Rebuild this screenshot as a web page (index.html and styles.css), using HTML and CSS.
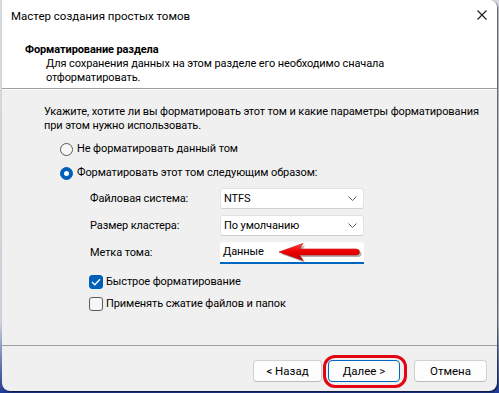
FILE: index.html
```html
<!DOCTYPE html>
<html lang="ru">
<head>
<meta charset="utf-8">
<title>Мастер создания простых томов</title>
<link rel="stylesheet" href="styles.css">
</head>
<body>
<div class="window">
  <div class="titlebar">
    <span class="title">Мастер создания простых томов</span>
    <svg class="close" width="10" height="10" viewBox="0 0 10 10"><path d="M0.5 0.5 L9.5 9.5 M9.5 0.5 L0.5 9.5" stroke="#1a1a1a" stroke-width="1.1" fill="none"/></svg>
  </div>
  <div class="header">
    <div class="h-title">Форматирование раздела</div>
    <div class="h-desc">Для сохранения данных на этом разделе его необходимо сначала<br>отформатировать.</div>
  </div>
  <div class="content">
    <div class="intro">Укажите, хотите ли вы форматировать этот том и какие параметры форматирования<br>при этом нужно использовать.</div>
    <div class="radios">
      <div class="row"><span class="radio"></span><span>Не форматировать данный том</span></div>
      <div class="row"><span class="radio checked"></span><span>Форматировать этот том следующим образом:</span></div>
    </div>
    <div class="fields">
      <span class="label">Файловая система:</span>
      <div class="select"><span>NTFS</span><svg class="chev" width="9" height="5" viewBox="0 0 9 5"><path d="M0.5 0.5 L4.5 4.5 L8.5 0.5" stroke="#606060" stroke-width="1" fill="none"/></svg></div>
      <span class="label">Размер кластера:</span>
      <div class="select"><span>По умолчанию</span><svg class="chev" width="9" height="5" viewBox="0 0 9 5"><path d="M0.5 0.5 L4.5 4.5 L8.5 0.5" stroke="#606060" stroke-width="1" fill="none"/></svg></div>
      <span class="label">Метка тома:</span>
      <div class="input"><span>Данные</span>
        <svg class="arrow" width="86" height="22" viewBox="0 0 86 22">
          <defs>
            <linearGradient id="ag" x1="0" y1="0" x2="0" y2="1">
              <stop offset="0" stop-color="#ff4a4a"/>
              <stop offset="0.45" stop-color="#f00000"/>
              <stop offset="1" stop-color="#b80000"/>
            </linearGradient>
          </defs>
          <path d="M1 10 L25 1.5 L21.5 7 L78 7 Q81.5 7 81.5 10 Q81.5 13 78 13 L21.5 13 L25 18.5 Z" fill="#000" opacity="0.3" transform="translate(2,2)"/>
          <path d="M1 10 L25 1.5 L21.5 7 L78 7 Q81.5 7 81.5 10 Q81.5 13 78 13 L21.5 13 L25 18.5 Z" fill="url(#ag)" stroke="#c00000" stroke-width="0.6"/>
        </svg>
      </div>
    </div>
    <div class="checks">
      <div class="row"><span class="check checked"><svg width="10" height="8" viewBox="0 0 10 8"><path d="M1 4 L3.8 6.8 L9 1.2" stroke="#fff" stroke-width="1.3" fill="none"/></svg></span><span>Быстрое форматирование</span></div>
      <div class="row"><span class="check"></span><span>Применять сжатие файлов и папок</span></div>
    </div>
  </div>
  <div class="footer">
    <button class="btn b-back">&lt; Назад</button>
    <span class="hl"><button class="btn b-next">Далее &gt;</button></span>
    <button class="btn b-cancel">Отмена</button>
  </div>
</div>
</body>
</html>
```
FILE: styles.css
```css
html, body {
  margin: 0;
  padding: 0;
}
body {
  width: 499px;
  height: 393px;
  overflow: hidden;
  background: linear-gradient(to bottom, #d9dce3 0%, #d0d4dc 82%, #1f3a96 100%);
  font-family: Roboto, "Liberation Sans", Arial, sans-serif;
  font-size: 11px;
  letter-spacing: -0.1px;
  color: #000;
}
.window {
  margin-left: 2px;
  width: 495px;
  height: 391px;
  display: flex;
  flex-direction: column;
  background: #f0f0f0;
  border-radius: 0 8px 8px 8px;
  overflow: hidden;
  box-shadow: 1px 1px 2px rgba(0,0,0,0.7);
}
.titlebar {
  height: 30px;
  flex: none;
  background: #fff;
  display: flex;
  align-items: center;
  justify-content: space-between;
  padding: 0 10px 0 9px;
}
.title {
  font-size: 11.5px;
  letter-spacing: 0;
  margin-top: 2px;
}
.close {
  display: block;
}
.header {
  flex: none;
  height: 59px;
  background: #fff;
  border-bottom: 1px solid #a0a0a0;
  box-sizing: border-box;
  padding: 13px 0 0 23px;
  line-height: 14px;
}
.h-title {
  font-weight: bold;
}
.h-desc {
  padding-left: 21px;
}
.content {
  flex: 1;
  padding: 15px 0 0 42px;
  line-height: 14px;
  border-top: 1px solid #fff;
}
.intro {
  white-space: nowrap;
}
.row {
  display: flex;
  align-items: center;
  height: 20px;
  white-space: nowrap;
}
.radios {
  margin: 6px 0 0 16px;
  display: flex;
  flex-direction: column;
  gap: 4px;
}
.radio {
  width: 11px;
  height: 11px;
  border: 1px solid #5a5a5a;
  border-radius: 50%;
  background: #f7f7f7;
  margin-right: 4px;
  position: relative;
}
.radio.checked {
  background: #005fb8;
  border-color: #005fb8;
}
.radio.checked::after {
  content: "";
  position: absolute;
  left: 3px;
  top: 3px;
  width: 5px;
  height: 5px;
  border-radius: 50%;
  background: #fff;
}
.fields {
  margin: 5px 0 0 46px;
  display: grid;
  grid-template-columns: 130px 144px;
  grid-auto-rows: 21px;
  row-gap: 6px;
  align-items: center;
}
.label {
  line-height: 21px;
}
.select, .input {
  height: 21px;
  box-sizing: border-box;
  background: #fff;
  border: 1px solid #e2e2e2;
  border-bottom-color: #cfcfcf;
  border-radius: 3px;
  display: flex;
  align-items: center;
  justify-content: space-between;
  padding: 0 6px 0 3px;
}
.input {
  border: none;
  border-bottom: 2px solid #0067c0;
  border-radius: 2px 2px 0 0;
  position: relative;
  height: 22px;
  padding-top: 1px;
}
.chev {
  display: block;
}
.arrow {
  position: absolute;
  left: 58px;
  top: 0;
}
.checks {
  margin: 9px 0 0 45px;
  display: flex;
  flex-direction: column;
  gap: 2px;
}
.check {
  width: 12px;
  height: 12px;
  border: 1px solid #5a5a5a;
  border-radius: 3px;
  background: #f7f7f7;
  margin-right: 3px;
  display: flex;
  align-items: center;
  justify-content: center;
}
.check.checked {
  background: #005fb8;
  border-color: #005fb8;
}
.check svg {
  display: block;
}
.footer {
  flex: none;
  height: 46px;
  box-sizing: border-box;
  border-top: 1px solid #a0a0a0;
  padding: 14px 10px 0 0;
  display: flex;
  justify-content: flex-end;
  align-items: flex-start;
}
.btn {
  height: 22px;
  box-sizing: border-box;
  font-family: inherit;
  font-size: 11.5px;
  color: #000;
  background: #fdfdfd;
  border: 1px solid #d0d0d0;
  border-bottom-color: #bcbcbc;
  border-radius: 4px;
  padding: 0;
  display: block;
}
.b-back { width: 69px; }
.b-next {
  width: 72px;
  border-color: #0067c0;
}
.b-cancel { width: 73px; margin-left: 14px; }
.hl {
  position: relative;
  margin-left: 6px;
  display: block;
}
.hl::after {
  content: "";
  position: absolute;
  left: -5px;
  right: -7px;
  top: -5px;
  bottom: -6px;
  border: 3px solid #e30613;
  border-radius: 12px;
  pointer-events: none;
}
```
